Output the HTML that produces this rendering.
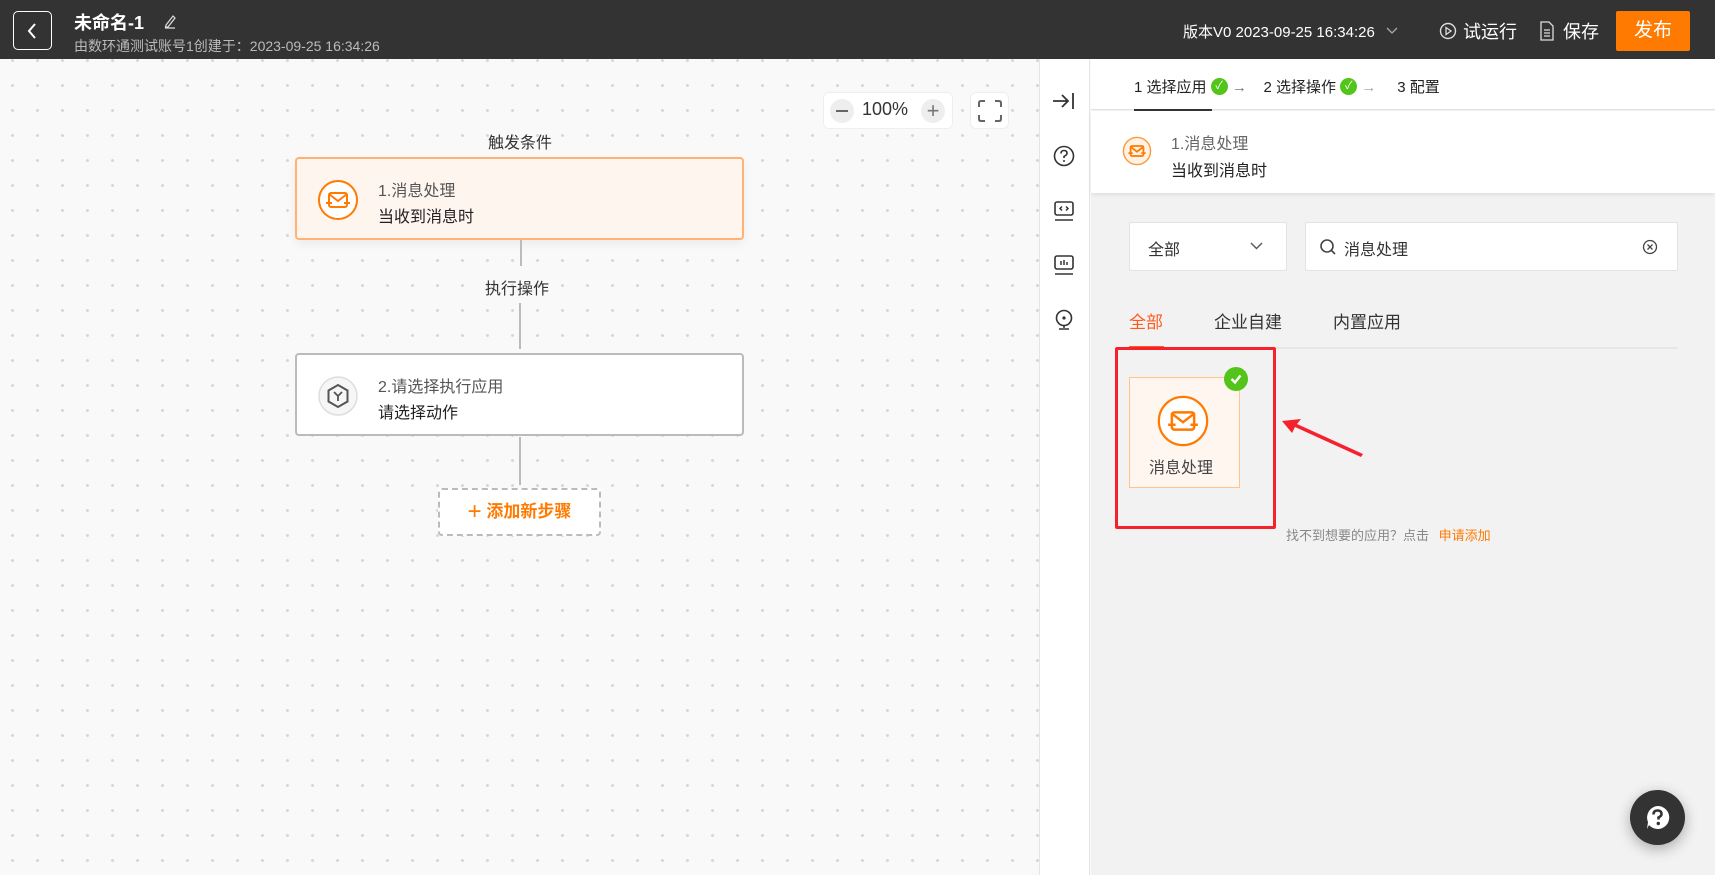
<!DOCTYPE html>
<html><head><meta charset="utf-8"><style>
*{box-sizing:border-box;margin:0;padding:0}
body{width:1715px;height:875px;overflow:hidden;position:relative;font-family:"Liberation Sans","Noto Sans CJK SC",sans-serif;background:#f9f9f9;color:#333}
.abs{position:absolute}
.hdr{left:0;top:0;width:1715px;height:59px;background:#333;}
.canvas{left:0;top:59px;width:1039px;height:816px;background-color:#f9f9f9;background-image:radial-gradient(circle,#d6d6d6 1.3px,transparent 1.6px);background-size:25px 25px;background-position:0px -11px}
.card{position:absolute;left:295px;width:449px;height:83px;border-radius:4px;background:#fff}
.txt1{position:absolute;left:81px;top:18px;font-size:16px;color:#555}
.txt2{position:absolute;left:81px;top:44px;font-size:16px;color:#222}
.ck{display:inline-block;width:17px;height:17px;border-radius:50%;background:#52c41a;color:#fff;font-size:11px;text-align:center;line-height:17px;vertical-align:middle;position:relative;top:-2px}
</style></head><body>
<div class="abs hdr">
  <div class="abs" style="left:13px;top:11px;width:39px;height:39px;border:1.5px solid #fff;border-radius:5px"></div>
  <svg class="abs" style="left:25px;top:22px" width="16" height="18" viewBox="0 0 16 18"><path d="M10 2 L4 9 L10 16" stroke="#fff" stroke-width="2" fill="none"/></svg>
  <div class="abs" style="left:74px;top:9px;font-size:18px;font-weight:bold;color:#fff">未命名-1</div>
  <svg class="abs" style="left:162px;top:13px" width="16" height="16" viewBox="0 0 16 16"><path d="M4 12 L11 3 L13 5 L6 14 L3.5 14 Z M3 15 H13" stroke="#ddd" stroke-width="1.2" fill="none"/></svg>
  <div class="abs" style="left:74px;top:36px;font-size:14px;color:#bbb">由数环通测试账号1创建于：2023-09-25 16:34:26</div>
  <div class="abs" style="left:1183px;top:21px;font-size:15px;color:#fff">版本V0 2023-09-25 16:34:26</div>
  <svg class="abs" style="left:1386px;top:27px" width="12" height="8" viewBox="0 0 12 8"><path d="M1 1 L6 6 L11 1" stroke="#aaa" stroke-width="1.3" fill="none"/></svg>
  <svg class="abs" style="left:1439px;top:22px" width="18" height="18" viewBox="0 0 18 18"><circle cx="9" cy="9" r="7.5" stroke="#ddd" stroke-width="1.4" fill="none"/><path d="M7 5.5 L12 9 L7 12.5Z" stroke="#ddd" stroke-width="1.3" fill="none"/></svg>
  <div class="abs" style="left:1463px;top:18px;font-size:18px;color:#fff">试运行</div>
  <svg class="abs" style="left:1539px;top:21px" width="16" height="20" viewBox="0 0 16 20"><path d="M2 1 H10 L14 5 V19 H2 Z M5 9 H11 M5 12 H11 M5 15 H11" stroke="#ddd" stroke-width="1.3" fill="none"/></svg>
  <div class="abs" style="left:1563px;top:18px;font-size:18px;color:#fff">保存</div>
  <div class="abs" style="left:1616px;top:11px;width:74px;height:40px;background:#ff7a00;border-radius:2px;color:#fff;font-size:19px;text-align:center;line-height:40px">发布</div>
</div>

<div class="abs canvas">
  <div class="abs" style="left:823px;top:33px;width:130px;height:37px;background:#fff;border:1px solid #eee;border-radius:6px"></div>
  <div class="abs" style="left:830px;top:40px;width:24px;height:24px;border-radius:50%;background:#eee"></div>
  <div class="abs" style="left:836px;top:51px;width:12px;height:2px;background:#666"></div>
  <div class="abs" style="left:862px;top:40px;font-size:18px;color:#333">100%</div>
  <div class="abs" style="left:921px;top:40px;width:24px;height:24px;border-radius:50%;background:#eee;color:#777;font-size:22px;text-align:center;line-height:23px">+</div>
  <div class="abs" style="left:970px;top:33px;width:39px;height:37px;background:#fff;border:1px solid #eee;border-radius:6px"></div>
  <svg class="abs" style="left:977px;top:40px" width="26" height="24" viewBox="0 0 26 24"><path d="M2 8 V4 Q2 2 4 2 H8 M18 2 H22 Q24 2 24 4 V8 M24 16 V20 Q24 22 22 22 H18 M8 22 H4 Q2 22 2 20 V16" stroke="#666" stroke-width="2" fill="none"/></svg>

  <div class="abs" style="left:488px;top:70px;font-size:16px;color:#333">触发条件</div>
  <div class="card" style="top:98px;background:#fff5ef;border:2px solid #ffb273;box-shadow:0 4px 10px rgba(0,0,0,0.06)">
    <svg class="abs" style="left:20px;top:20px" width="42" height="42" viewBox="0 0 42 42"><circle cx="21" cy="21" r="19" stroke="#ff7a00" stroke-width="2" fill="#fff"/><rect x="12" y="14" width="18" height="14" rx="2" stroke="#ff7a00" stroke-width="2" fill="none"/><path d="M12 15 L21 22 L30 15" stroke="#ff7a00" stroke-width="2" fill="none"/><path d="M9 24 H15 M33 24 H27" stroke="#ff7a00" stroke-width="2"/></svg>
    <div class="txt1">1.消息处理</div><div class="txt2">当收到消息时</div>
  </div>
  <div class="abs" style="left:520px;top:181px;width:2px;height:26px;background:#bbb"></div>
  <div class="abs" style="left:485px;top:216px;font-size:16px;color:#333">执行操作</div>
  <div class="abs" style="left:519px;top:244px;width:2px;height:46px;background:#bbb"></div>
  <div class="card" style="top:294px;border:2px solid #bbb">
    <svg class="abs" style="left:20px;top:20px" width="42" height="42" viewBox="0 0 42 42"><circle cx="21" cy="21" r="19" stroke="#ddd" stroke-width="1.5" fill="#f6f6f6"/><path d="M21 10 L30.5 15.5 V26.5 L21 32 L11.5 26.5 V15.5 Z" stroke="#555" stroke-width="2" fill="none"/><path d="M17 17 L21 21 L25 17 M21 21 V26" stroke="#555" stroke-width="1.8" fill="none"/></svg>
    <div class="txt1">2.请选择执行应用</div><div class="txt2">请选择动作</div>
  </div>
  <div class="abs" style="left:519px;top:378px;width:2px;height:48px;background:#bbb"></div>
  <div class="abs" style="left:438px;top:429px;width:163px;height:48px;border:2px dashed #bbb;border-radius:4px;background:#fff;color:#ff7a00;font-size:17px;font-weight:bold;text-align:center;line-height:44px"><span style="font-size:24px;font-weight:normal;vertical-align:-2px">+</span> 添加新步骤</div>
</div>

<div class="abs" style="left:1039px;top:59px;width:51px;height:816px;background:#fff;border-left:1px solid #e5e5e5;border-right:1px solid #e5e5e5"></div>
<svg class="abs" style="left:1052px;top:91px" width="24" height="20" viewBox="0 0 24 20"><path d="M1 10 H16 M10 4 L16 10 L10 16 M21 2 V18" stroke="#333" stroke-width="1.8" fill="none"/></svg>
<svg class="abs" style="left:1053px;top:145px" width="22" height="22" viewBox="0 0 22 22"><circle cx="11" cy="11" r="9.5" stroke="#333" stroke-width="1.6" fill="none"/><path d="M8 8.5 Q8 5.5 11 5.5 Q14 5.5 14 8.3 Q14 10 11 11.5 V13" stroke="#333" stroke-width="1.6" fill="none"/><circle cx="11" cy="16" r="1" fill="#333"/></svg>
<svg class="abs" style="left:1053px;top:200px" width="22" height="22" viewBox="0 0 22 22"><rect x="2" y="2" width="18" height="13" rx="2" stroke="#333" stroke-width="1.6" fill="none"/><path d="M2 20 H20 M9 6.5 L7 8.5 L9 10.5 M13 6.5 L15 8.5 L13 10.5" stroke="#333" stroke-width="1.5" fill="none"/></svg>
<svg class="abs" style="left:1053px;top:254px" width="22" height="22" viewBox="0 0 22 22"><rect x="2" y="2" width="18" height="13" rx="2" stroke="#333" stroke-width="1.6" fill="none"/><path d="M2 20 H20 M8 7 V11 M11 6 V11 M14 8 V11" stroke="#333" stroke-width="1.5" fill="none"/></svg>
<svg class="abs" style="left:1053px;top:309px" width="22" height="22" viewBox="0 0 22 22"><circle cx="11" cy="9" r="7.5" stroke="#333" stroke-width="1.6" fill="none"/><circle cx="11" cy="9" r="1.6" fill="#333"/><path d="M11 16.5 V19 M6 20 H16" stroke="#333" stroke-width="1.6"/></svg>

<div class="abs" style="left:1091px;top:59px;width:624px;height:816px;background:#f2f2f2">
  <div class="abs" style="left:0;top:0;width:624px;height:51px;background:#fff;border-bottom:1px solid #e2e2e2"></div>
  <div class="abs" style="left:43px;top:17px;font-size:15px;color:#222;white-space:nowrap">1 选择应用 <span class="ck">✓</span> <span style="color:#777">→</span>&nbsp;&nbsp;&nbsp; 2 选择操作 <span class="ck">✓</span> <span style="color:#aaa">→</span>&nbsp;&nbsp;&nbsp;&nbsp; 3 配置</div>
  <div class="abs" style="left:43px;top:50px;width:78px;height:2px;background:#333"></div>
  <div class="abs" style="left:0;top:52px;width:624px;height:82px;background:#fff;box-shadow:0 2px 4px rgba(0,0,0,0.08)"></div>
  <svg class="abs" style="left:31px;top:77px" width="30" height="30" viewBox="0 0 42 42"><circle cx="21" cy="21" r="19" stroke="#ff9a3c" stroke-width="2" fill="#fff3e8"/><rect x="12" y="14" width="18" height="14" rx="2" stroke="#ff7a00" stroke-width="2.5" fill="none"/><path d="M12 15 L21 22 L30 15" stroke="#ff7a00" stroke-width="2.5" fill="none"/><path d="M9 24 H15 M33 24 H27" stroke="#ff7a00" stroke-width="2.5"/></svg>
  <div class="abs" style="left:80px;top:71px;font-size:16px;color:#666">1.消息处理</div>
  <div class="abs" style="left:80px;top:98px;font-size:16px;color:#222">当收到消息时</div>

  <div class="abs" style="left:38px;top:163px;width:158px;height:49px;background:#fff;border:1px solid #e2e2e2;border-radius:2px"></div>
  <div class="abs" style="left:57px;top:177px;font-size:16px;color:#333">全部</div>
  <svg class="abs" style="left:159px;top:183px" width="13" height="8" viewBox="0 0 13 8"><path d="M1 1 L6.5 6.5 L12 1" stroke="#555" stroke-width="1.4" fill="none"/></svg>
  <div class="abs" style="left:214px;top:163px;width:373px;height:49px;background:#fff;border:1px solid #e2e2e2;border-radius:2px"></div>
  <svg class="abs" style="left:228px;top:179px" width="18" height="18" viewBox="0 0 18 18"><circle cx="8" cy="8" r="6" stroke="#444" stroke-width="1.6" fill="none"/><path d="M12.5 12.5 L16 16" stroke="#444" stroke-width="1.6"/></svg>
  <div class="abs" style="left:253px;top:177px;font-size:16px;color:#333">消息处理</div>
  <svg class="abs" style="left:551px;top:180px" width="16" height="16" viewBox="0 0 16 16"><circle cx="8" cy="8" r="6.5" stroke="#444" stroke-width="1.3" fill="none"/><path d="M5.5 5.5 L10.5 10.5 M10.5 5.5 L5.5 10.5" stroke="#444" stroke-width="1.3"/></svg>

  <div class="abs" style="left:38px;top:249px;font-size:17px;color:#ff5a1f">全部</div>
  <div class="abs" style="left:123px;top:249px;font-size:17px;color:#333">企业自建</div>
  <div class="abs" style="left:242px;top:249px;font-size:17px;color:#333">内置应用</div>
  <div class="abs" style="left:38px;top:288px;width:549px;height:2px;background:#e6e6e6"></div>
  <div class="abs" style="left:38px;top:287px;width:35px;height:3px;background:#ff5a1f"></div>

  <div class="abs" style="left:24px;top:288px;width:161px;height:182px;border:3px solid #f5222d;border-radius:2px"></div>
  <div class="abs" style="left:38px;top:318px;width:111px;height:111px;background:#fff6f0;border:1px solid #ffc38c"></div>
  <svg class="abs" style="left:66px;top:336px" width="52" height="52" viewBox="0 0 42 42"><circle cx="21" cy="21" r="19.5" stroke="#ff7a00" stroke-width="1.8" fill="#fff"/><rect x="12" y="14" width="18" height="14" rx="2" stroke="#ff7a00" stroke-width="2" fill="none"/><path d="M12 15 L21 22 L30 15" stroke="#ff7a00" stroke-width="2" fill="none"/><path d="M9 24 H15 M33 24 H27" stroke="#ff7a00" stroke-width="2"/></svg>
  <div class="abs" style="left:58px;top:395px;font-size:16px;color:#444">消息处理</div>
  <div class="abs" style="left:133px;top:308px;width:24px;height:24px;border-radius:50%;background:#52c41a"></div>
  <svg class="abs" style="left:137px;top:312px" width="16" height="16" viewBox="0 0 16 16"><path d="M3.5 8 L7 11.5 L12.5 4.5" stroke="#fff" stroke-width="2.4" fill="none"/></svg>
  <svg class="abs" style="left:185px;top:355px" width="90" height="50" viewBox="0 0 90 50"><path d="M6 7 L25 5 L21 10 L87 40 L85 43 L19 13 L16 19 Z" fill="#f5222d"/></svg>
  <div class="abs" style="left:195px;top:466px;font-size:13px;color:#888">找不到想要的应用？点击 <span style="color:#ff7a00;margin-left:6px">申请添加</span></div>

  <div class="abs" style="left:539px;top:731px;width:55px;height:55px;border-radius:50%;background:#333;box-shadow:0 4px 14px rgba(0,0,0,0.3)"></div>
  <svg class="abs" style="left:553px;top:745px" width="27" height="27" viewBox="0 0 27 27"><path d="M13.5 2 A11.5 11.5 0 1 1 5 21 L3 25 L4 18 A11.5 11.5 0 0 1 13.5 2 Z" fill="#fff"/><path d="M9.5 10.5 Q9.5 6.5 13.5 6.5 Q17.5 6.5 17.5 10 Q17.5 12 14.5 13.5 V15.5" stroke="#333" stroke-width="2.6" fill="none"/><circle cx="14.3" cy="19.5" r="1.7" fill="#333"/></svg>
</div>
</body></html>
